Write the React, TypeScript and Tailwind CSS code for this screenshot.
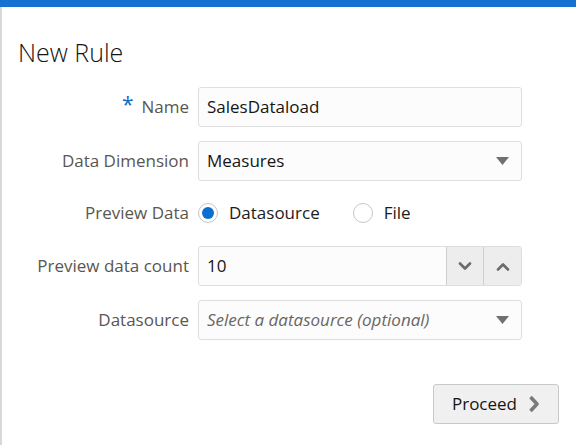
import React, { useState } from "react";

const font = { fontFamily: '"Open Sans", "Noto Sans", sans-serif' };

const Caret = () => (
  <svg width="13" height="8" viewBox="0 0 13 8" className="shrink-0">
    <path d="M0 0 L13 0 L6.5 8 Z" fill="#707070" />
  </svg>
);

const Chevron = ({ up }: { up?: boolean }) => (
  <svg width="14" height="9" viewBox="0 0 14 9">
    <path
      d={up ? "M2 7.5 L7 2.5 L12 7.5" : "M2 1.5 L7 6.5 L12 1.5"}
      fill="none"
      stroke="#6b6b6b"
      strokeWidth="2.6"
      strokeLinecap="round"
      strokeLinejoin="round"
    />
  </svg>
);

const Label = ({ children, required }: { children: React.ReactNode; required?: boolean }) => (
  <div className="flex items-center justify-end text-[17px] text-[#5a5651] whitespace-nowrap">
    {required && <span className="mr-[8px] text-[#1668c2] text-[21px] leading-none -mt-[6px]">*</span>}
    {children}
  </div>
);

const Radio = ({ checked, label, onClick }: { checked: boolean; label: string; onClick: () => void }) => (
  <div className="flex items-center gap-[11px] cursor-pointer" onClick={onClick}>
    <span className="w-[20px] h-[20px] rounded-full border border-[#c6c6c6] bg-white flex items-center justify-center">
      {checked && <span className="w-[12px] h-[12px] rounded-full bg-[#0a6fd0]" />}
    </span>
    <span className="text-[17px] text-[#1c1b1a]">{label}</span>
  </div>
);

export default function App() {
  const [source, setSource] = useState("datasource");

  return (
    <div className="w-[576px] h-[445px] bg-white flex flex-col overflow-hidden" style={font}>
      <div className="h-[7px] bg-[#1672d0] shrink-0" />
      <div className="flex-1 border-l-2 border-[#d8d8d8] flex flex-col">
        <h1 className="ml-[16px] mt-[28px] text-[25px] font-light text-[#161513] leading-[34px]">New Rule</h1>

        <div className="mt-[18px] grid grid-cols-[187px_324px] gap-x-[9px] gap-y-[14px]">
          <Label required>Name</Label>
          <div className="h-[40px] rounded-[3px] border border-[#dedede] bg-[#fcfcfc] flex items-center px-[8px] text-[17px] text-[#161513]">
            SalesDataload
          </div>

          <Label>Data Dimension</Label>
          <div className="h-[40px] rounded-[3px] border border-[#dedede] bg-[#fcfcfc] flex items-center justify-between pl-[8px] pr-[12px] text-[17px] text-[#161513]">
            <span>Measures</span>
            <Caret />
          </div>

          <div className="h-[37px] pb-[2px] flex items-center justify-end text-[17px] text-[#5a5651]">Preview Data</div>
          <div className="h-[37px] pb-[2px] flex items-center gap-[33px]">
            <Radio checked={source === "datasource"} label="Datasource" onClick={() => setSource("datasource")} />
            <Radio checked={source === "file"} label="File" onClick={() => setSource("file")} />
          </div>

          <Label>Preview data count</Label>
          <div className="h-[40px] rounded-[3px] border border-[#dedede] bg-[#fcfcfc] flex items-stretch text-[17px] text-[#161513] overflow-hidden">
            <div className="flex-1 flex items-center px-[8px]">10</div>
            <div className="w-[37px] border-l border-[#cfcfcf] bg-[#ededed] flex items-center justify-center">
              <Chevron />
            </div>
            <div className="w-[38px] border-l border-[#cfcfcf] bg-[#ededed] flex items-center justify-center">
              <Chevron up />
            </div>
          </div>

          <Label>Datasource</Label>
          <div className="h-[40px] rounded-[3px] border border-[#dedede] bg-[#fcfcfc] flex items-center justify-between pl-[8px] pr-[12px] text-[17px] text-[#6b6661] italic">
            <span>Select a datasource (optional)</span>
            <Caret />
          </div>
        </div>

        <div className="mt-[44px] flex justify-end pr-[17px]">
          <button className="h-[40px] w-[126px] rounded-[3px] border border-[#c9c9c9] bg-[#f0f0f0] flex items-center justify-center gap-[11px] text-[17px] text-[#161513]">
            Proceed
            <svg width="12" height="18" viewBox="0 0 12 18">
              <path d="M2.5 2 L9 9 L2.5 16" fill="none" stroke="#7a7a7a" strokeWidth="3.6" strokeLinejoin="round" />
            </svg>
          </button>
        </div>
      </div>
    </div>
  );
}
